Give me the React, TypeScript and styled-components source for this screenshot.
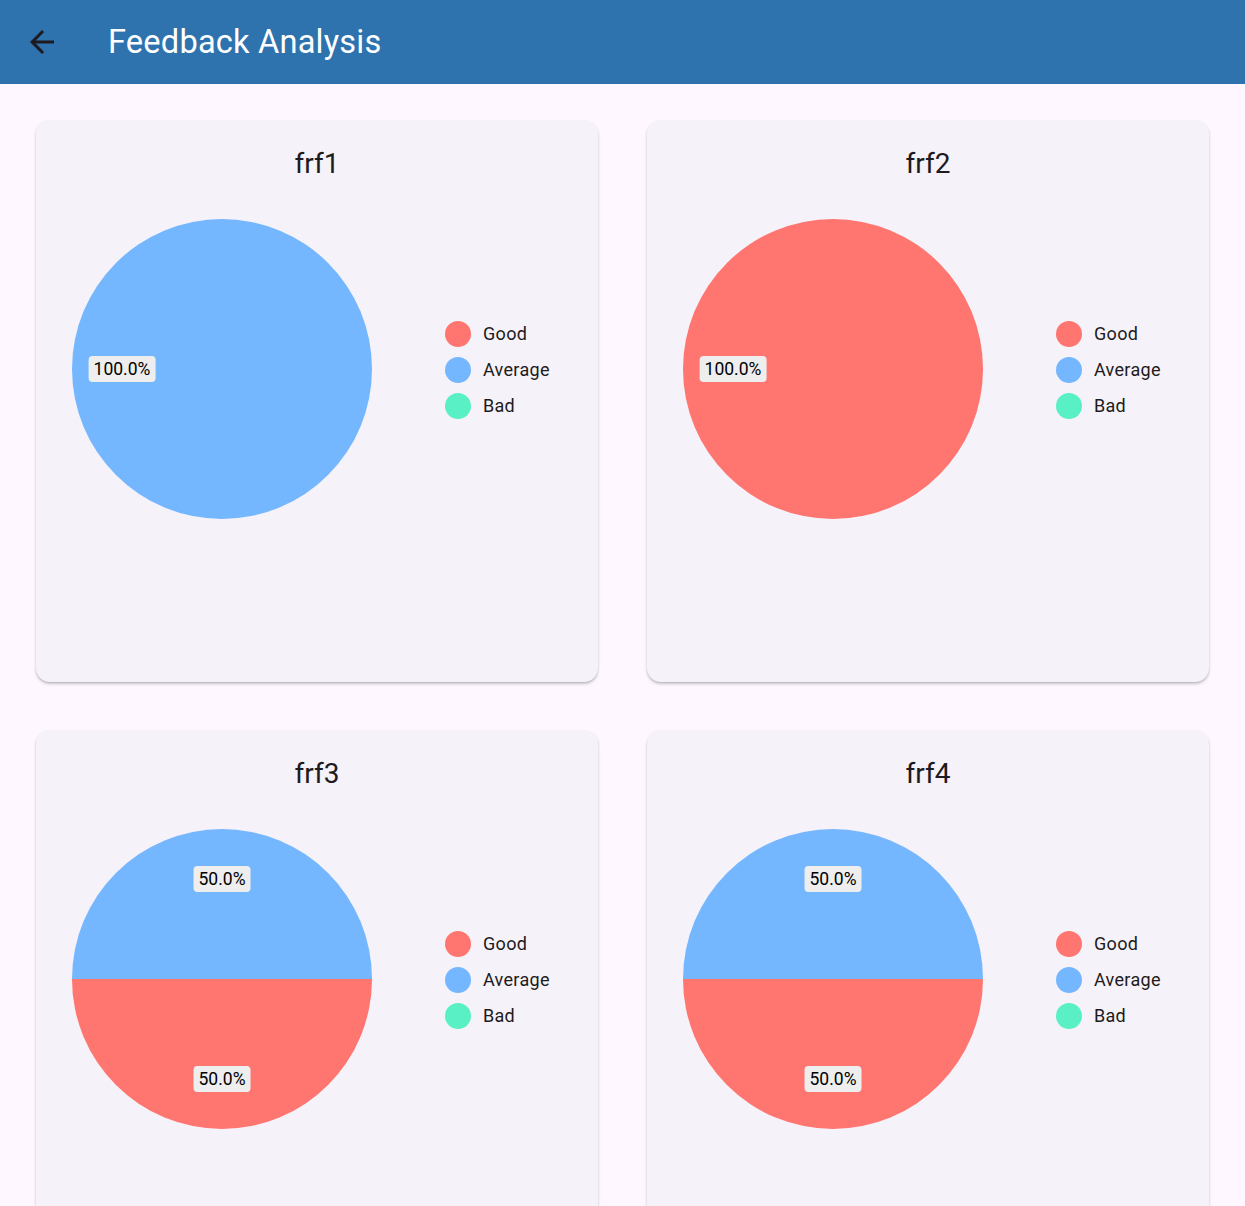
import React from 'react';
import styled, { createGlobalStyle } from 'styled-components';

const GlobalStyle = createGlobalStyle`
    body {
        margin: 0;
        background: #fef7ff;
        font-family: Roboto, "Noto Sans", sans-serif;
        color: #1d1b20;
    }
`;

const COLORS = {
    good: '#ff7570',
    average: '#75b7ff',
    bad: '#59f0c5',
};

type Slice = { key: keyof typeof COLORS; value: number };

interface Feedback {
    title: string;
    slices: Slice[];
}

const feedbacks: Feedback[] = [
    { title: 'frf1', slices: [{ key: 'average', value: 1 }] },
    { title: 'frf2', slices: [{ key: 'good', value: 1 }] },
    {
        title: 'frf3',
        slices: [
            { key: 'good', value: 1 },
            { key: 'average', value: 1 },
        ],
    },
    {
        title: 'frf4',
        slices: [
            { key: 'good', value: 1 },
            { key: 'average', value: 1 },
        ],
    },
];

const AppBar = styled.header`
    height: 84px;
    background: #2e73ae;
    display: flex;
    align-items: center;
    padding-left: 24px;
`;

const BackButton = styled.button`
    width: 36px;
    height: 36px;
    padding: 0;
    border: none;
    background: none;
    display: flex;
    align-items: center;
    justify-content: center;
    cursor: pointer;
`;

const Title = styled.h1`
    margin: 0 0 0 48px;
    font-size: 32.6px;
    font-weight: 400;
    color: #ffffff;
    letter-spacing: 0.2px;
`;

const Grid = styled.main`
    display: grid;
    grid-template-columns: 1fr 1fr;
    gap: 48px 49px;
    padding: 36px 36px;
`;

const Card = styled.section`
    aspect-ratio: 1;
    background: #f6f2f9;
    border-radius: 14px;
    box-shadow: 0 2px 3px rgba(0, 0, 0, 0.22), 0 1px 1px rgba(0, 0, 0, 0.06);
    display: flex;
    flex-direction: column;
    align-items: stretch;
`;

const CardTitle = styled.h2`
    margin: 24px 0 0;
    text-align: center;
    font-size: 28px;
    line-height: 40px;
    font-weight: 400;
`;

const ChartRow = styled.div`
    display: flex;
    align-items: center;
    margin-top: 35px;
    padding-left: 36px;
`;

const PieBox = styled.div`
    position: relative;
    width: 300px;
    height: 300px;
    flex-shrink: 0;
`;

const PieLabel = styled.span`
    position: absolute;
    transform: translate(-50%, -50%);
    background: #eeeeee;
    border-radius: 4px;
    padding: 3px 5px;
    font-size: 17.5px;
    line-height: 20px;
    color: #000000;
    white-space: nowrap;
`;

const Legend = styled.ul`
    list-style: none;
    margin: 2px 0 0 73px;
    padding: 0;
    display: flex;
    flex-direction: column;
    gap: 10px;
`;

const LegendItem = styled.li`
    display: flex;
    align-items: center;
    gap: 12px;
    font-size: 18px;
    line-height: 26px;
    letter-spacing: 0.3px;
`;

const Dot = styled.span<{ $color: string }>`
    width: 26px;
    height: 26px;
    border-radius: 50%;
    background: ${(p) => p.$color};
`;

const R = 150;

// slices start at 3 o'clock and run clockwise
const PieChart = ({ slices }: { slices: Slice[] }) => {
    const total = slices.reduce((s, x) => s + x.value, 0);
    let start = 0;
    const parts = slices.map((s) => {
        const sweep = (s.value / total) * Math.PI * 2;
        const a0 = start;
        const a1 = start + sweep;
        start = a1;
        return { ...s, a0, a1, pct: (s.value / total) * 100 };
    });

    return (
        <PieBox>
            <svg width={300} height={300} viewBox="0 0 300 300">
                {parts.map((p) => {
                    if (p.a1 - p.a0 >= Math.PI * 2 - 1e-6) {
                        return <circle key={p.key} cx={R} cy={R} r={R} fill={COLORS[p.key]} />;
                    }
                    const x0 = R + R * Math.cos(p.a0);
                    const y0 = R + R * Math.sin(p.a0);
                    const x1 = R + R * Math.cos(p.a1);
                    const y1 = R + R * Math.sin(p.a1);
                    const large = p.a1 - p.a0 > Math.PI ? 1 : 0;
                    return (
                        <path
                            key={p.key}
                            d={`M${R} ${R} L${x0} ${y0} A${R} ${R} 0 ${large} 1 ${x1} ${y1} Z`}
                            fill={COLORS[p.key]}
                        />
                    );
                })}
            </svg>
            {parts.map((p) => {
                const mid = p.a1 - p.a0 >= Math.PI * 2 - 1e-6 ? Math.PI : (p.a0 + p.a1) / 2;
                const x = R + 100 * Math.cos(mid);
                const y = R + 100 * Math.sin(mid);
                return (
                    <PieLabel key={p.key} style={{ left: x, top: y }}>
                        {p.pct.toFixed(1)}%
                    </PieLabel>
                );
            })}
        </PieBox>
    );
};

const ArrowBack = () => (
    <svg width={36} height={36} viewBox="0 0 24 24" fill="#1d1b20">
        <path d="M20 11H7.83l5.59-5.59L12 4l-8 8 8 8 1.41-1.41L7.83 13H20v-2z" />
    </svg>
);

export default function App() {
    return (
        <>
            <GlobalStyle />
            <AppBar>
                <BackButton aria-label="Back">
                    <ArrowBack />
                </BackButton>
                <Title>Feedback Analysis</Title>
            </AppBar>
            <Grid>
                {feedbacks.map((f) => (
                    <Card key={f.title}>
                        <CardTitle>{f.title}</CardTitle>
                        <ChartRow>
                            <PieChart slices={f.slices} />
                            <Legend>
                                <LegendItem>
                                    <Dot $color={COLORS.good} />
                                    Good
                                </LegendItem>
                                <LegendItem>
                                    <Dot $color={COLORS.average} />
                                    Average
                                </LegendItem>
                                <LegendItem>
                                    <Dot $color={COLORS.bad} />
                                    Bad
                                </LegendItem>
                            </Legend>
                        </ChartRow>
                    </Card>
                ))}
            </Grid>
        </>
    );
}
